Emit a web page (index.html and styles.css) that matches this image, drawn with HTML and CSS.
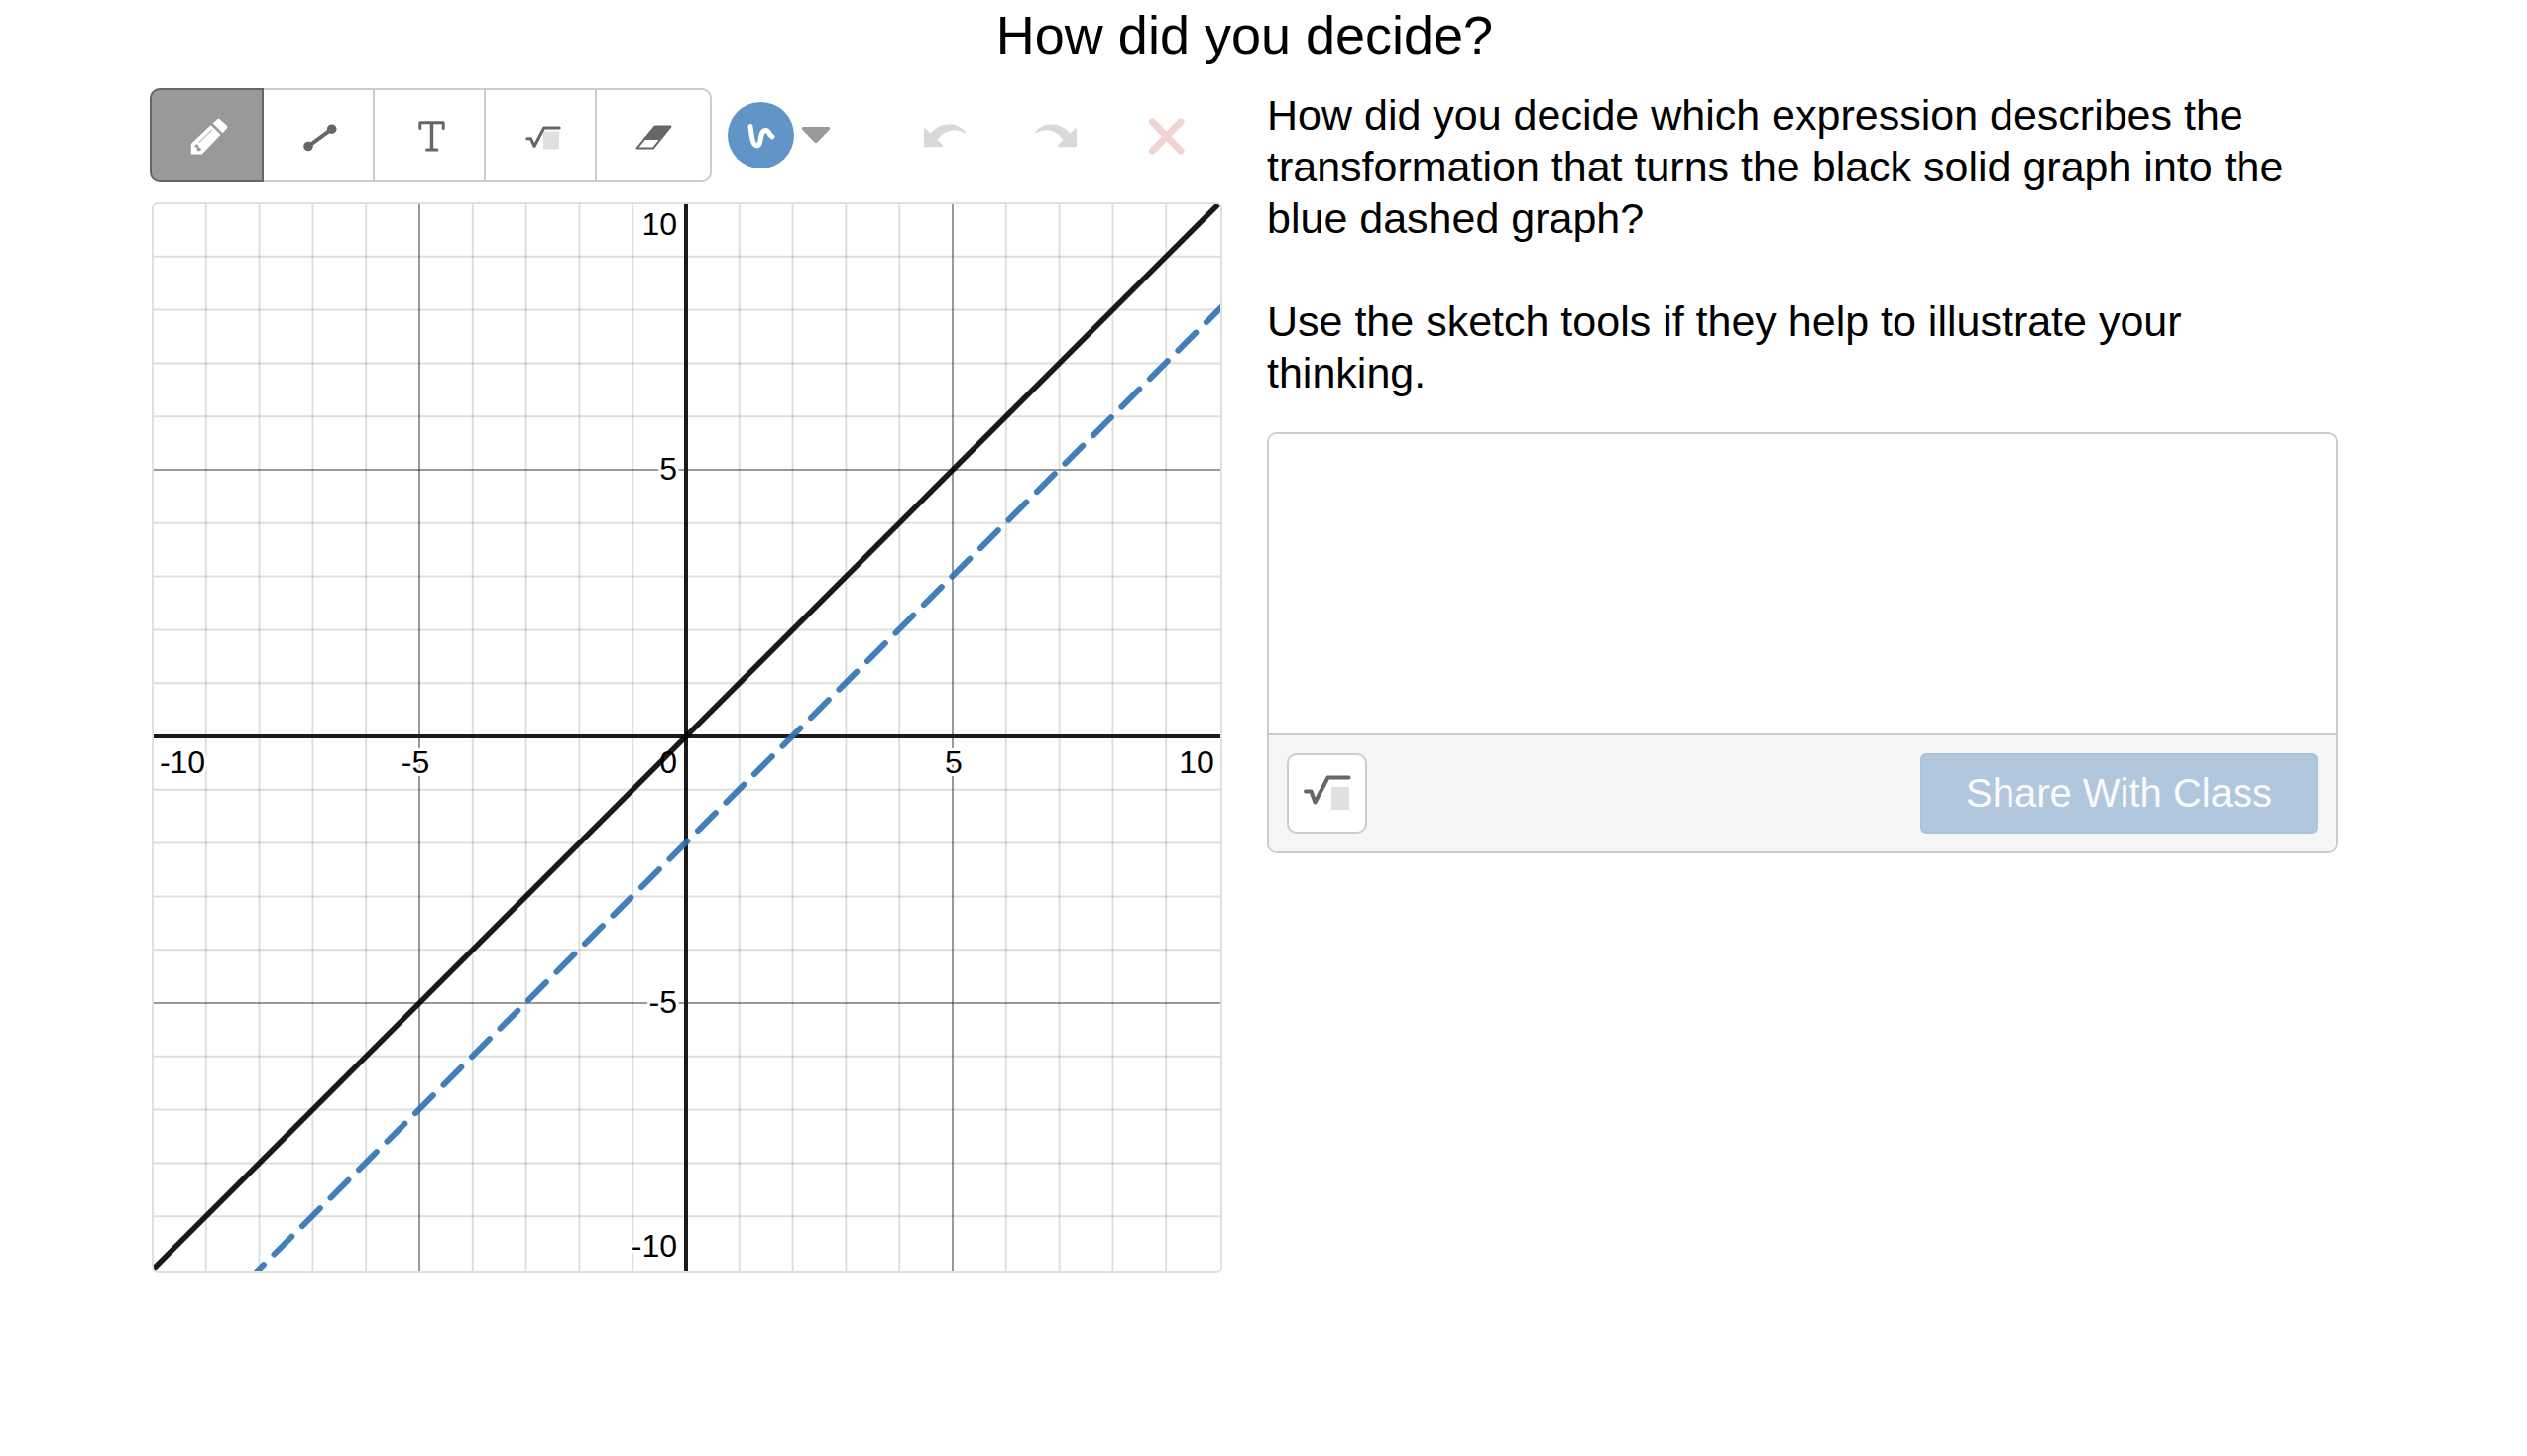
FILE: index.html
```
<!DOCTYPE html>
<html lang="en">
<head>
    <meta charset="UTF-8">
    <meta name="viewport" content="width=device-width, initial-scale=1.0">
    <title>How did you decide?</title>
    <link rel="stylesheet" href="styles.css">
</head>
<body>
    <main class="screen">
        <h1 class="title">How did you decide?</h1>

        <div class="columns">
            <section class="sketch">
                <div class="toolbar">
                    <div class="tools">
                        <button type="button" class="tool selected" aria-label="Pencil">
                            <svg class="icon" viewBox="0 0 48 48">
                                <path fill="#fff" d="M7.8 42.5V32L27.6 13.3L37.6 22.8L18.8 42.5Z"/>
                                <path fill="#fff" d="M29.6 11.6L34 7.4Q35.5 6 37 7.4L43.6 13.6Q45 15 43.8 16.5L39.6 21.2Z"/>
                                <path stroke="#999" stroke-width="1" d="M15.5 30.8L28.8 17.8"/>
                                <path fill="#999" d="M11 34.5L13 32.5L15 33L15.2 35.2L18.4 37.2L16 39.6L13.6 38.4L14 36Z"/>
                            </svg>
                        </button>
                        <button type="button" class="tool" aria-label="Line">
                            <svg class="icon" viewBox="0 0 48 48">
                                <path stroke="#666" stroke-width="4" d="M14 34.5L37.7 17.2"/>
                                <circle fill="#666" cx="14" cy="34.5" r="4.8"/>
                                <circle fill="#666" cx="37.7" cy="17.2" r="4.8"/>
                            </svg>
                        </button>
                        <button type="button" class="tool" aria-label="Text">
                            <svg class="icon" viewBox="0 0 48 48">
                                <path fill="none" stroke="#666" stroke-width="3" stroke-linecap="round" stroke-linejoin="round" d="M14.8 16.5V10.7H38.2V16.5M21.5 38H32"/>
                                <path stroke="#666" stroke-width="3.5" d="M26.5 10.7V38"/>
                            </svg>
                        </button>
                        <button type="button" class="tool" aria-label="Math">
                            <svg class="icon" viewBox="0 0 48 48">
                                <rect fill="#e0e0e0" x="27" y="19.5" width="16" height="18"/>
                                <path fill="none" stroke="#666" stroke-width="3" stroke-linejoin="round" stroke-linecap="round" d="M10.8 26.8H14.6L18 34.5L27.7 16H43.2"/>
                            </svg>
                        </button>
                        <button type="button" class="tool" aria-label="Eraser">
                            <svg class="icon" viewBox="0 0 48 48">
                                <path fill="none" stroke="#666" stroke-width="2" stroke-linejoin="round" d="M25.5 14.6H41.5L24 36.4H7.6Z"/>
                                <path fill="#666" d="M25.2 14H42L30.2 28H13.2Z"/>
                            </svg>
                        </button>
                    </div>

                    <button type="button" class="color-menu" aria-label="Color">
                        <svg class="color-dot" viewBox="0 0 67 67">
                            <circle fill="#6295c7" cx="33.5" cy="33.5" r="33.5"/>
                            <path fill="none" stroke="#fff" stroke-width="5" stroke-linecap="round" d="M23 24.5C24 33 25 43.5 29.5 43.8C35 44 31.500 28.500 38.500 28.500C42 28.500 41 32.500 45 34.800"/>
                        </svg>
                        <svg class="caret" viewBox="0 0 30 17">
                            <path fill="#999" d="M2 0H28Q30 1 28.6 3L16.4 15.6Q15 17 13.6 15.6L1.4 3Q0 1 2 0Z"/>
                        </svg>
                    </button>

                    <div class="actions">
                        <button type="button" class="action" aria-label="Undo" disabled>
                            <svg class="icon" viewBox="0 0 48 48">
                                <path fill="#d9d9d9" d="M3 16.5Q3 15.5 4.2 16.5L9.8 21.5C14.5 16 21 12.3 28.5 12.3C36 12.3 41.5 16 45 20.5Q45.4 22 43.8 21.2C34 15.5 23.5 18.5 16.5 28L22 33.6Q23 35.3 21.5 35.3H4.8Q3 35.3 3 33.5Z"/>
                            </svg>
                        </button>
                        <button type="button" class="action" aria-label="Redo" disabled>
                            <svg class="icon" viewBox="0 0 48 48">
                                <path fill="#d9d9d9" d="M45 16.5Q45 15.5 43.8 16.5L38.2 21.5C33.5 16 27 12.3 19.5 12.3C12 12.3 6.5 16 3 20.5Q2.6 22 4.2 21.2C14 15.5 24.5 18.5 31.5 28L26 33.6Q25 35.3 26.5 35.3H43.2Q45 35.3 45 33.5Z"/>
                            </svg>
                        </button>
                        <button type="button" class="action" aria-label="Clear" disabled>
                            <svg class="icon" viewBox="0 0 48 48">
                                <path stroke="#f0d3d3" stroke-width="7" stroke-linecap="round" d="M9.5 10L38 39M38 10L9.5 39"/>
                            </svg>
                        </button>
                    </div>
                </div>

                <div class="graph">
                    <svg class="plot" id="plot" viewBox="0 0 1076 1076" role="img" aria-label="Graph of a solid black line and a dashed blue line">
                        <g id="grid"></g>
                        <g class="labels">
                            <text x="29" y="574" text-anchor="middle">-10</text>
                            <text x="264" y="574" text-anchor="middle">-5</text>
                            <text x="807" y="574" text-anchor="middle">5</text>
                            <text x="1052" y="574" text-anchor="middle">10</text>
                            <text x="528" y="31" text-anchor="end">10</text>
                            <text x="528" y="278" text-anchor="end">5</text>
                            <text x="528" y="574" text-anchor="end">0</text>
                            <text x="528" y="816" text-anchor="end">-5</text>
                            <text x="528" y="1062" text-anchor="end">-10</text>
                        </g>
                        <path class="curve solid" d="M1 1073L1073 1"/>
                        <path class="curve dashed" d="M93 1088L1100 81"/>
                    </svg>
                </div>
            </section>

            <section class="question">
                <label class="prompt" for="answer">
                    <span>How did you decide which expression describes the transformation that turns the black solid graph into the blue dashed graph?</span>
                    <span>Use the sketch tools if they help to illustrate your thinking.</span>
                </label>

                <form class="response">
                    <textarea class="answer" id="answer"></textarea>
                    <div class="response-footer">
                        <button type="button" class="math-button" aria-label="Insert math">
                            <svg class="math-icon" viewBox="0 0 60 60">
                                <rect fill="#e0e0e0" x="34" y="23" width="18" height="23"/>
                                <path fill="none" stroke="#666" stroke-width="4" stroke-linejoin="round" stroke-linecap="round" d="M8 27.5H13.5L17.5 38.5L30.5 13.5H51.5"/>
                            </svg>
                        </button>
                        <button type="submit" class="share-button" disabled>Share With Class</button>
                    </div>
                </form>
            </section>
        </div>
    </main>

    <script>
        // Grid lines and axes, one line per unit
        const grid = document.getElementById("grid");
        const center = 537;
        const unit = 53.8;

        function addLine(d, cls) {
            const path = document.createElementNS("http://www.w3.org/2000/svg", "path");
            path.setAttribute("d", d);
            path.setAttribute("class", cls);
            grid.appendChild(path);
        }

        for (let i = -9; i <= 9; i++) {
            if (i === 0) continue;
            const pos = center + i * unit;
            const cls = i % 5 === 0 ? "major" : "minor";
            addLine(`M${pos} 0V1076`, cls);
            addLine(`M0 ${pos}H1076`, cls);
        }
        addLine(`M${center} 0V1076`, "axis");
        addLine(`M0 ${center}H1076`, "axis");
    </script>
</body>
</html>
```

FILE: styles.css
```
* {
    box-sizing: border-box;
}
body {
    margin: 0;
    padding-right: 38px;
    background: white;
    color: black;
    font-family: Arial, "Liberation Sans", sans-serif;
}
button {
    padding: 0;
    border: none;
    background: none;
    font-family: inherit;
}
svg {
    display: block;
}
.screen {
    padding: 0 153px;
}
.title {
    margin: 0 0 19px;
    font-size: 54px;
    font-weight: normal;
    line-height: 70px;
    text-align: center;
}
.columns {
    display: grid;
    grid-template-columns: 1fr 1fr;
    gap: 45px;
    align-items: start;
}

/* Sketch tools */
.toolbar {
    display: flex;
    align-items: center;
    gap: 16px;
    margin: 0 0 20px -2px;
}
.tools {
    display: flex;
}
.tool {
    display: flex;
    align-items: center;
    justify-content: center;
    width: 114px;
    height: 95px;
    margin-left: -2px;
    border: 2px solid #ccc;
    background: white;
}
.tool:first-child {
    width: 115px;
    margin-left: 0;
    border-radius: 10px 0 0 10px;
}
.tool:last-child {
    width: 118px;
    border-radius: 0 10px 10px 0;
}
.tool.selected {
    position: relative;
    border-color: #666;
    background: #999;
}
.icon {
    width: 48px;
    height: 48px;
}
.color-menu {
    display: flex;
    align-items: center;
    gap: 7px;
}
.color-dot {
    width: 67px;
    height: 67px;
}
.caret {
    width: 30px;
    height: 17px;
}
.actions {
    display: flex;
    margin-left: auto;
}
.action {
    display: flex;
    align-items: center;
    justify-content: center;
    width: 112px;
    height: 95px;
}

/* Graph */
.graph {
    border: 2px solid #e0e0e0;
    border-radius: 6px;
    overflow: hidden;
}
.plot {
    width: 100%;
}
.minor {
    stroke: rgba(0, 0, 0, 0.13);
    stroke-width: 2;
}
.major {
    stroke: rgba(0, 0, 0, 0.4);
    stroke-width: 2;
}
.axis {
    stroke: #1a1a1a;
    stroke-width: 4;
}
.labels {
    font-size: 32px;
    stroke: white;
    stroke-width: 6px;
    stroke-linejoin: round;
    paint-order: stroke;
}
.curve {
    fill: none;
    stroke-linecap: round;
    opacity: 0.9;
}
.solid {
    stroke: black;
    stroke-width: 5.5;
}
.dashed {
    stroke: #2d70b3;
    stroke-width: 6;
    stroke-dasharray: 25.3 15;
}

/* Question and answer */
.prompt {
    display: flex;
    flex-direction: column;
    gap: 52px;
    padding-top: 1px;
    font-size: 43px;
    line-height: 52px;
}
.response {
    margin-top: 34px;
    border: 2px solid #ccc;
    border-radius: 10px;
    overflow: hidden;
}
.answer {
    display: block;
    width: 100%;
    height: 302px;
    padding: 18px;
    border: none;
    outline: none;
    resize: none;
    font-family: inherit;
    font-size: 40px;
}
.response-footer {
    display: flex;
    justify-content: space-between;
    padding: 18px;
    border-top: 2px solid #ccc;
    background: #f6f6f6;
}
.math-button {
    display: flex;
    align-items: center;
    justify-content: center;
    width: 81px;
    height: 81px;
    border: 2px solid #ccc;
    border-radius: 10px;
    background: white;
}
.math-icon {
    width: 60px;
    height: 60px;
}
.share-button {
    height: 81px;
    padding: 0 44px;
    border: 2px solid #abc2dc;
    border-radius: 6px;
    background: #b0c7de;
    color: #fafafa;
    font-size: 40px;
}
```
